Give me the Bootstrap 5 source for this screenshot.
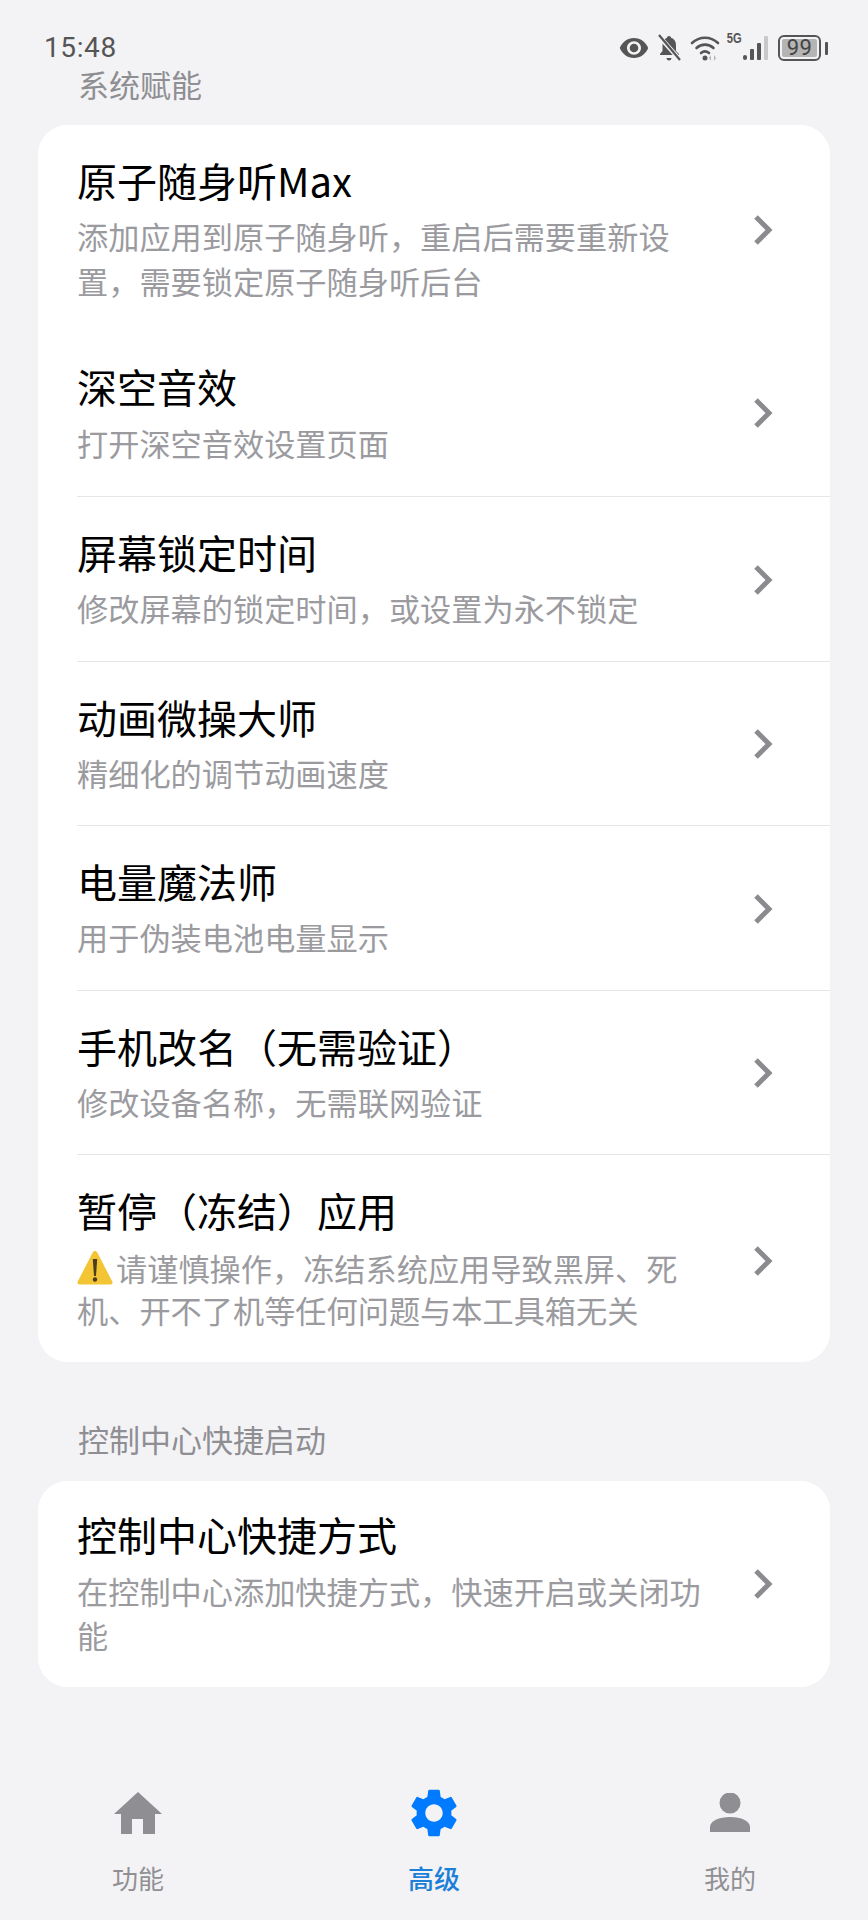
<!DOCTYPE html>
<html lang="zh-CN">
<head>
<meta charset="utf-8">
<title>高级</title>
<link rel="stylesheet" href="https://cdn.jsdelivr.net/npm/bootstrap@5.3.0/dist/css/bootstrap.min.css">
<style>
html,body{height:100%}
body{background:#f3f3f5;font-family:"Noto Sans CJK SC","Noto Sans",sans-serif;color:#000;width:868px;height:1920px;overflow:hidden}
.phone-shell{height:1920px}
.status-strip{padding:31px 40px 0 44px;height:65px;color:#555}
.clock-text{font-family:Roboto,sans-serif;font-size:28px;line-height:34px;letter-spacing:.6px}
.status-icons{gap:9px;height:34px}
.net-label{font-family:"Liberation Sans",sans-serif;font-size:14px;font-weight:700;line-height:14px;align-self:flex-start;margin:0 -10px 0 -4px;transform:scaleX(.8)}
.batt-box{width:43px;height:26px;border:2.5px solid #555;border-radius:6px;padding:2px;display:block}
.batt-fill{display:block;background:#b4b4b4;height:100%;border-radius:2px;font-family:Roboto,sans-serif;font-size:22px;line-height:17px;text-align:center;color:#444;letter-spacing:.5px}
.batt-nub{width:3px;height:13px;background:#555;border-radius:1px;margin-left:-6px}
.group-title{font-size:31px;line-height:38px;color:#8e8e93;padding-left:78px;margin:0;font-weight:400}
.group-first{margin-bottom:22px;margin-top:0}
.group-next{margin-top:58px;margin-bottom:23px}
.settings-card{margin:0 38px;border-radius:30px;background:#fff;overflow:hidden}
.settings-row{padding-left:39px;background:#fff;border:0;border-radius:0}
.list-group-item.settings-row{padding-left:0}
.row-inner{padding:27px 0 30.5px}
.row-inner.with-line{border-top:1.5px solid #e6e6e8}
.row-inner.row-top{padding-bottom:32px}
.row-inner.tight{padding:23px 0 31px}
.row-inner.row-warn{padding-bottom:31px}
.row-inner.row-shortcut{padding:25px 0 30px}
.row-copy{width:640px}
.row-name{font-size:40px;line-height:56px;margin:0;font-weight:400;color:#000}
.row-desc{font-size:31.2px;line-height:45px;margin:5px 0 0;color:#9b9b9f}
.tight .row-desc{margin-top:6px}
.row-warn .row-desc{line-height:42px;margin-top:8.5px}
.row-shortcut .row-desc{margin-top:7px;line-height:44px}
.chev-box{margin-left:36px}
.chev-box.chev-up{margin-bottom:5px}
.with-line .chev-box{margin-top:5px}
.row-warn .chev-box{margin-top:10px}
.warn-glyph{vertical-align:-4px;margin-right:3px}
.tab-strip{padding:101px 88px 0}
.tab-cell{width:100px;text-decoration:none}
.tab-graphic{height:50px;flex:none}
.tab-name{font-size:26px;line-height:32px;margin-top:24px;color:#909094}
.tab-name.on{color:#1c7fd8;font-weight:500}
</style>
</head>
<body>
<div class="phone-shell d-flex flex-column">
  <div class="status-strip d-flex justify-content-between align-items-start">
    <span class="clock-text">15:48</span>
    <div class="status-icons d-flex align-items-center">
      <svg width="30" height="22" viewBox="0 0 30 22"><path fill="#555" fill-rule="evenodd" d="M15 1C8.500 1 3.200 5 .8 11c2.400 6 7.700 10 14.200 10s11.800-4 14.200-10C26.800 5 21.500 1 15 1zm0 3.300c3.900 0 7 3 7 6.700s-3.100 6.700-7 6.700-7-3-7-6.700 3.100-6.700 7-6.700z"/><circle cx="15" cy="11" r="4.300" fill="#555"/></svg>
      <svg width="23" height="28" viewBox="0 0 23 28"><path fill="#555" d="M11 2c1.200 0 2 .8 2 1.800 3.300 1 5 3.600 5 7.200v6l3 3v1H2v-1l2.500-3v-6c0-3.600 2-6.200 4.500-7.200C9 2.800 9.800 2 11 2zM8.500 24h5c0 1.500-1 2.500-2.500 2.500S8.500 25.500 8.500 24z"/><path stroke="#f3f3f5" stroke-width="4.500" d="M0 1l23 26"/><path stroke="#555" stroke-width="2.200" d="M1 1l21 25"/></svg>
      <svg width="30" height="26" viewBox="0 0 30 26"><g fill="none" stroke="#555" stroke-width="2.600" stroke-linecap="round"><path d="M2 8c7.500-7 18.500-7 26 0"/><path d="M6.500 13c5-4.500 12-4.500 17 0"/><path d="M11 18c2.500-2 5.500-2 8 0"/></g><circle cx="15" cy="23" r="2.500" fill="#555"/><path d="M21 20l-2 3 2 3zM24 20l2 3-2 3z" fill="#b5b5b5"/></svg>
      <span class="net-label">5G</span>
      <svg width="26" height="26" viewBox="0 0 26 26"><rect x="0" y="20" width="4" height="5" rx="2" fill="#555"/><rect x="7" y="14" width="4" height="11" rx="1" fill="#555"/><rect x="14" y="8" width="4" height="17" rx="1" fill="#555"/><rect x="21" y="1" width="4" height="24" rx="1" fill="#c8c8ca"/></svg>
      <div class="d-flex align-items-center">
        <span class="batt-box"><span class="batt-fill">99</span></span>
        <span class="batt-nub ms-1"></span>
      </div>
    </div>
  </div>

  <h2 class="group-title group-first">系统赋能</h2>
  <div class="list-group settings-card">
    <div class="list-group-item settings-row p-0">
      <div class="settings-row d-flex align-items-center">
        <div class="row-inner row-top row-copy"><p class="row-name">原子随身听Max</p><p class="row-desc">添加应用到原子随身听&#xFF0C;重启后需要重新设置&#xFF0C;需要锁定原子随身听后台</p></div>
        <svg class="chev-box" width="20" height="32" viewBox="0 0 20 32"><path d="M3 3l13 13L3 29" fill="none" stroke="#8b8b8f" stroke-width="5"/></svg>
      </div>
    </div>
    <div class="list-group-item settings-row p-0">
      <div class="settings-row d-flex align-items-center">
        <div class="row-inner tight row-copy"><p class="row-name">深空音效</p><p class="row-desc">打开深空音效设置页面</p></div>
        <svg class="chev-box chev-up" width="20" height="32" viewBox="0 0 20 32"><path d="M3 3l13 13L3 29" fill="none" stroke="#8b8b8f" stroke-width="5"/></svg>
      </div>
    </div>
    <div class="list-group-item settings-row p-0">
      <div class="settings-row"><div class="with-line row-inner d-flex align-items-center">
        <div class="row-copy"><p class="row-name">屏幕锁定时间</p><p class="row-desc">修改屏幕的锁定时间&#xFF0C;或设置为永不锁定</p></div>
        <svg class="chev-box" width="20" height="32" viewBox="0 0 20 32"><path d="M3 3l13 13L3 29" fill="none" stroke="#8b8b8f" stroke-width="5"/></svg>
      </div></div>
    </div>
    <div class="list-group-item settings-row p-0">
      <div class="settings-row"><div class="with-line row-inner d-flex align-items-center">
        <div class="row-copy"><p class="row-name">动画微操大师</p><p class="row-desc">精细化的调节动画速度</p></div>
        <svg class="chev-box" width="20" height="32" viewBox="0 0 20 32"><path d="M3 3l13 13L3 29" fill="none" stroke="#8b8b8f" stroke-width="5"/></svg>
      </div></div>
    </div>
    <div class="list-group-item settings-row p-0">
      <div class="settings-row"><div class="with-line row-inner d-flex align-items-center">
        <div class="row-copy"><p class="row-name">电量魔法师</p><p class="row-desc">用于伪装电池电量显示</p></div>
        <svg class="chev-box" width="20" height="32" viewBox="0 0 20 32"><path d="M3 3l13 13L3 29" fill="none" stroke="#8b8b8f" stroke-width="5"/></svg>
      </div></div>
    </div>
    <div class="list-group-item settings-row p-0">
      <div class="settings-row"><div class="with-line row-inner d-flex align-items-center">
        <div class="row-copy"><p class="row-name">手机改名&#xFF08;无需验证&#xFF09;</p><p class="row-desc">修改设备名称&#xFF0C;无需联网验证</p></div>
        <svg class="chev-box" width="20" height="32" viewBox="0 0 20 32"><path d="M3 3l13 13L3 29" fill="none" stroke="#8b8b8f" stroke-width="5"/></svg>
      </div></div>
    </div>
    <div class="list-group-item settings-row p-0">
      <div class="settings-row"><div class="with-line row-inner row-warn d-flex align-items-center">
        <div class="row-copy"><p class="row-name">暂停&#xFF08;冻结&#xFF09;应用</p><p class="row-desc"><svg class="warn-glyph" width="36" height="34" viewBox="0 0 36 34"><path d="M18 0c1 0 1.800.6 2.300 1.600l15 29c.7 1.300-.1 2.900-1.700 2.900H2.400c-1.600 0-2.400-1.600-1.700-2.900l15-29C16.200.6 17 0 18 0z" fill="#f3c534"/><path d="M15.800 8h4.400l-1.200 17h-2z" fill="#4d3d20"/><circle cx="18" cy="28.500" r="2.200" fill="#4d3d20"/></svg>请谨慎操作&#xFF0C;冻结系统应用导致黑屏、死机、开不了机等任何问题与本工具箱无关</p></div>
        <svg class="chev-box" width="20" height="32" viewBox="0 0 20 32"><path d="M3 3l13 13L3 29" fill="none" stroke="#8b8b8f" stroke-width="5"/></svg>
      </div></div>
    </div>
  </div>

  <h2 class="group-title group-next">控制中心快捷启动</h2>
  <div class="list-group settings-card">
    <div class="list-group-item settings-row p-0">
      <div class="settings-row d-flex align-items-center">
        <div class="row-inner row-shortcut row-copy"><p class="row-name">控制中心快捷方式</p><p class="row-desc">在控制中心添加快捷方式&#xFF0C;快速开启或关闭功能</p></div>
        <svg class="chev-box" width="20" height="32" viewBox="0 0 20 32"><path d="M3 3l13 13L3 29" fill="none" stroke="#8b8b8f" stroke-width="5"/></svg>
      </div>
    </div>
  </div>

  <nav class="tab-strip d-flex justify-content-between">
    <a class="tab-cell d-flex flex-column align-items-center" href="#">
      <span class="tab-graphic d-flex align-items-center"><svg width="48" height="42" viewBox="0 0 48 42"><path fill="#8e8e93" d="M24 0L48 22H41V42H29V27H18V42H7V22H0z"/></svg></span>
      <span class="tab-name">功能</span>
    </a>
    <a class="tab-cell d-flex flex-column align-items-center" href="#">
      <span class="tab-graphic d-flex align-items-center"><svg width="58" height="58" viewBox="0 0 24 24"><path fill="#007aff" d="M19.140 12.940c.04-.3.06-.61.06-.94 0-.32-.02-.64-.07-.94l2.030-1.580c.18-.14.23-.41.12-.61l-1.920-3.320c-.12-.22-.37-.29-.59-.22l-2.390.96c-.5-.38-1.030-.7-1.620-.94l-.36-2.540c-.04-.24-.24-.41-.48-.41h-3.840c-.24 0-.43.17-.47.41l-.36 2.540c-.59.24-1.130.57-1.620.94l-2.390-.96c-.22-.08-.47 0-.59.22L2.740 8.870c-.12.21-.08.47.12.61l2.030 1.580c-.05.3-.09.63-.09.94s.02.64.07.94l-2.030 1.580c-.18.14-.23.41-.12.61l1.920 3.320c.12.22.37.29.59.22l2.390-.96c.5.38 1.030.7 1.620.94l.36 2.540c.05.24.24.41.48.41h3.840c.24 0 .44-.17.47-.41l.36-2.540c.59-.24 1.130-.56 1.620-.94l2.390.96c.22.08.47 0 .59-.22l1.920-3.320c.12-.22.07-.47-.12-.61l-2.010-1.580zM12 15.600c-1.980 0-3.600-1.620-3.600-3.600s1.620-3.600 3.600-3.600 3.600 1.620 3.600 3.600-1.620 3.600-3.600 3.600z"/></svg></span>
      <span class="tab-name on">高级</span>
    </a>
    <a class="tab-cell d-flex flex-column align-items-center" href="#">
      <span class="tab-graphic d-flex align-items-center"><svg width="40" height="40" viewBox="0 0 40 40"><ellipse cx="20" cy="10" rx="10.500" ry="10.500" fill="#8e8e93"/><path fill="#8e8e93" d="M0 39v-5c0-6 9-10 20-10s20 4 20 10v5z"/></svg></span>
      <span class="tab-name">我的</span>
    </a>
  </nav>
</div>
</body>
</html>
